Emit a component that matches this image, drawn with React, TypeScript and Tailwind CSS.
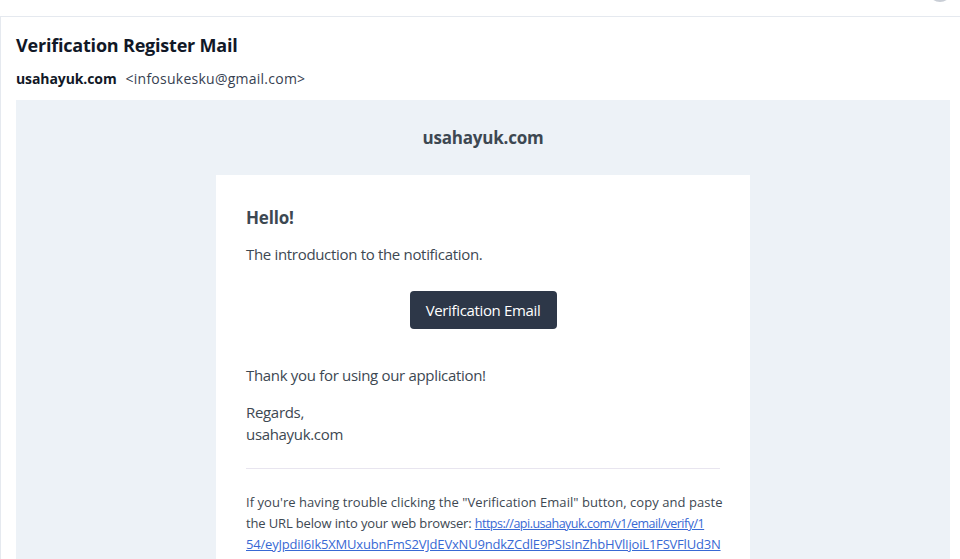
import React from "react";

const font = { fontFamily: '"Open Sans", "Noto Sans", sans-serif' };

export default function App() {
  return (
    <div className="h-[559px] w-[960px] overflow-hidden bg-white text-[#3d4852]" style={font}>
      <div className="relative h-[17px] border-b border-[#e5e9ef]">
        <div className="absolute right-[8px] top-[-22px] h-[24px] w-[24px] rounded-full bg-[#c9ced6]" />
      </div>
      <div className="border-l border-[#e5e9ef] pl-[15px] pr-[10px]">
        <div className="pt-[15px] text-[18px] font-bold leading-[27px] tracking-[-0.2px] text-[#111827]">
          Verification Register Mail
        </div>
        <div className="mt-[10px] flex items-center text-[14px] leading-[20px] text-[#1f2937]">
          <span className="font-bold tracking-[-0.1px] text-[#111827]">usahayuk.com</span>
          <span className="ml-[9px] tracking-[0.25px] text-[#374151]">&lt;infosukesku@gmail.com&gt;</span>
        </div>
        <div className="mt-[11px] bg-[#edf2f7]">
          <div className="flex h-[75px] items-center justify-center text-[17px] font-bold tracking-[-0.2px] text-[#3d4852]">
            usahayuk.com
          </div>
          <div className="mx-auto w-[534px] bg-white px-[30px] pt-[31px] pb-[30px]">
            <h1 className="mb-[13px] text-[17px] font-bold leading-[24px] tracking-[-0.2px] text-[#3d4852]">Hello!</h1>
            <p className="text-[15px] leading-[22px] tracking-[-0.32px]">The introduction to the notification.</p>
            <div className="mt-[26px] flex justify-center">
              <div className="flex h-[38px] w-[147px] items-center justify-center rounded-[4px] bg-[#2d3748] text-[15px] tracking-[-0.35px] text-white">
                Verification Email
              </div>
            </div>
            <p className="mt-[35px] text-[15px] leading-[22px] tracking-[-0.32px]">Thank you for using our application!</p>
            <p className="mt-[15px] text-[15px] leading-[22px] tracking-[-0.32px]">
              Regards,
              <br />
              usahayuk.com
            </p>
            <div className="mt-[23px] border-t border-[#e8e5ef]" />
            <div className="mt-[23px] whitespace-nowrap text-[13px] leading-[21px]">
              <div className="tracking-[0.05px]">If you're having trouble clicking the "Verification Email" button, copy and paste</div>
              <div className="tracking-[-0.15px]">
                the URL below into your web browser:{" "}
                <span className="text-[12.5px] tracking-[-0.5px] text-[#3869d4] underline">https://api.usahayuk.com/v1/email/verify/1</span>
              </div>
              <div className="tracking-[-0.2px] text-[#3869d4] underline">
                54/eyJpdiI6Ik5XMUxubnFmS2VJdEVxNU9ndkZCdlE9PSIsInZhbHVlIjoiL1FSVFlUd3N
              </div>
              <div className="tracking-[-0.2px] text-[#3869d4] underline">
                VVpQcmJjY0ZSUldNT29jNXB3QUFSbjdTRzZNQkVHVFpUZ3ViVkZOWVdBQ3hKVTB
              </div>
            </div>
          </div>
        </div>
      </div>
    </div>
  );
}
